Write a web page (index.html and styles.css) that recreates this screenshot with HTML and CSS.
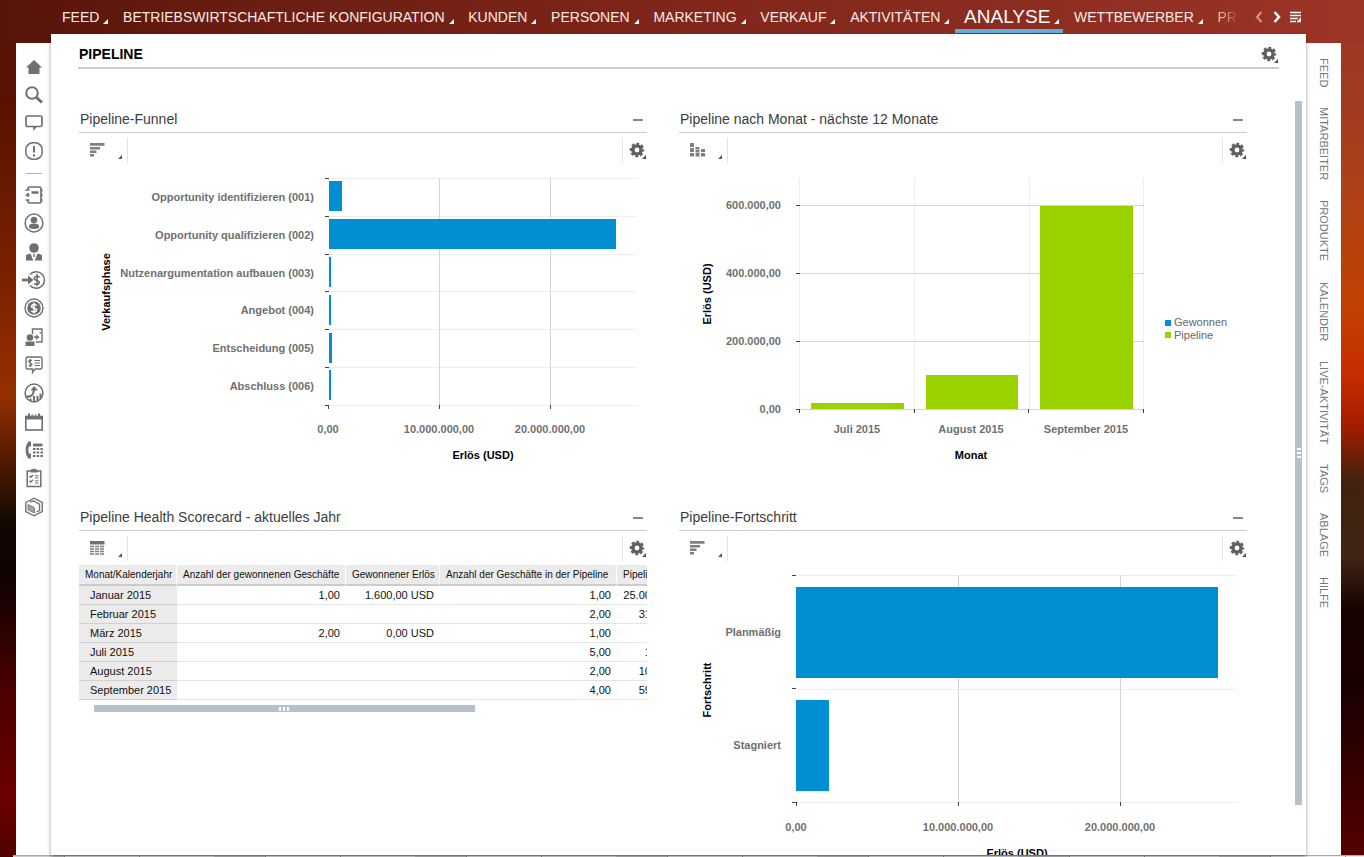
FILE: index.html
```
<!DOCTYPE html>
<html lang="de">
<head>
<meta charset="utf-8">
<title>Pipeline</title>
<link rel="stylesheet" href="styles.css">
</head>
<body>
<svg class="defs" aria-hidden="true">
  <symbol id="gear" viewBox="0 0 18 18">
    <circle cx="8" cy="8" r="4.1" fill="none" stroke="#606060" stroke-width="3.4"/>
    <circle cx="8" cy="8" r="6.1" fill="none" stroke="#606060" stroke-width="2.400" stroke-dasharray="2.9 1.891" stroke-dashoffset="1.45"/>
    <path d="M17 13v4h-4z" fill="#505050"/>
  </symbol>
  <symbol id="corner" viewBox="0 0 5 5"><path d="M5 0v5H0z" fill="currentColor"/></symbol>
  <symbol id="hbars" viewBox="0 0 15 14"><path d="M0 0h14.500v2.800H0zM0 4h10v2.500H0zM0 7.500h6.500V10H0zM0 11h4v2.500H0z" fill="#808080"/></symbol>
  <symbol id="vbars" viewBox="0 0 15 14"><path d="M0 0h4v4H0zM0 5h4v4H0zM0 10h4v3.500H0zM5.500 4h4v2.500h-4zM5.500 7h4v2.500h-4zM5.500 10h4v3.500h-4zM11 6h4v3h-4zM11 10h4v3.500h-4z" fill="#808080"/></symbol>
  <symbol id="grid" viewBox="0 0 15 14"><path d="M0 0h14.500v3.500H0z" fill="#707070"/><path d="M0 5.500h14.500M0 8h14.500M0 10.500h14.500M0 13h14.500" stroke="#808080" stroke-width="1.700" stroke-dasharray="4 1"/></symbol>
</svg>

<header class="topbar">
  <nav class="topnav" aria-label="Hauptnavigation">
    <a href="#" class="topnav-item">FEED<svg class="corner"><use href="#corner"/></svg></a>
    <a href="#" class="topnav-item">BETRIEBSWIRTSCHAFTLICHE KONFIGURATION<svg class="corner"><use href="#corner"/></svg></a>
    <a href="#" class="topnav-item">KUNDEN<svg class="corner"><use href="#corner"/></svg></a>
    <a href="#" class="topnav-item">PERSONEN<svg class="corner"><use href="#corner"/></svg></a>
    <a href="#" class="topnav-item">MARKETING<svg class="corner"><use href="#corner"/></svg></a>
    <a href="#" class="topnav-item">VERKAUF<svg class="corner"><use href="#corner"/></svg></a>
    <a href="#" class="topnav-item">AKTIVITÄTEN<svg class="corner"><use href="#corner"/></svg></a>
    <a href="#" class="topnav-item active" aria-current="page">ANALYSE<svg class="corner"><use href="#corner"/></svg></a>
    <a href="#" class="topnav-item">WETTBEWERBER<svg class="corner"><use href="#corner"/></svg></a>
    <a href="#" class="topnav-item fading">PR</a>
  </nav>
  <div class="topnav-tools">
    <button type="button" class="icon-btn dim" aria-label="Zurück"><svg width="10" height="12" viewBox="0 0 10 12"><path d="M7.500 1L3 6l4.500 5" fill="none" stroke="#fff" stroke-width="2"/></svg></button>
    <button type="button" class="icon-btn" aria-label="Weiter"><svg width="10" height="12" viewBox="0 0 10 12"><path d="M2.500 1L7 6l-4.500 5" fill="none" stroke="#fff" stroke-width="2.500"/></svg></button>
    <button type="button" class="icon-btn" aria-label="Menü"><svg width="12" height="12" viewBox="0 0 12 12"><path d="M0 1.500h11M0 4.500h11M0 7.500h8M0 10.500h6" stroke="#fff" stroke-width="1.600"/><path d="M11 6v5.300H6.500z" fill="#fff"/></svg></button>
  </div>
</header>

<div class="shell">
  <nav class="rail-left" aria-label="Arbeitsbereiche">
    <div class="rail-group rail-main">
      <a href="#" aria-label="Startseite"><svg viewBox="0 0 20 20"><path d="M10 3l8 7.500h-2.500V17h-11v-6.500H2z" fill="#707070" stroke="none"/></svg></a>
      <a href="#" aria-label="Suche"><svg viewBox="0 0 20 20"><circle cx="8" cy="8" r="5.800" stroke-width="2"/><path d="M12.500 12.500l5.500 5" stroke-width="3"/></svg></a>
      <a href="#" aria-label="Feed"><svg viewBox="0 0 20 20"><rect x="2" y="3" width="16" height="10.500" rx="1.500" stroke-width="1.700"/><path d="M9 13.500h4L9.500 18z" fill="#707070" stroke="none"/></svg></a>
      <a href="#" aria-label="Hinweise"><svg viewBox="0 0 20 20"><rect x="1.800" y="1.800" width="16.400" height="16.400" rx="7" stroke-width="1.500"/><path d="M10 5v6.500M10 13.200v2.300" stroke-width="2"/></svg></a>
    </div>
    <hr class="rail-divider">
    <div class="rail-group rail-work">
      <a href="#" aria-label="Kontakte"><svg viewBox="0 0 20 20"><path d="M4 5V3.500Q4 2 5.500 2h10Q17 2 17 3.500v13q0 1.500-1.500 1.500h-10Q4 18 4 16.500V15M4 8v4" stroke-width="1.700"/><path d="M7.500 7.500h7" stroke-width="2.500"/><path d="M1.500 5h4M1.500 10h4M1.500 15h4M17.800 4v2.500M17.800 9v2.500M17.800 14v2.500" stroke-width="1.400"/></svg></a>
      <a href="#" aria-label="Person"><svg viewBox="0 0 20 20"><circle cx="10" cy="10" r="8.900" stroke-width="1.500"/><circle cx="10" cy="7" r="3.300" fill="#707070" stroke="none"/><path d="M5 15v-1.500Q5 10.500 10 10.500t5 3V15Q10 17 5 15z" fill="#707070" stroke="none"/></svg></a>
      <a href="#" aria-label="Mitarbeiter"><svg viewBox="0 0 20 20"><circle cx="10" cy="6" r="4.800" fill="#707070" stroke="none"/><path d="M6.500 11.500L2 13v5.500h7.300zM13.500 11.500L18 13v5.500h-7.300z" fill="#707070" stroke="none"/><path d="M10 12v3" stroke-width="1.500"/></svg></a>
      <a href="#" aria-label="Leads"><svg class="wide" viewBox="-2 0 24 20"><path d="M6 4.500a8.300 8.300 0 1 1 0 11" stroke-width="1.500"/><path d="M-2 10h8" stroke-width="2.800"/><path d="M4 5.500L9.500 10 4 14.500z" fill="#707070" stroke="none"/><path d="M15.800 7.200q-3-2-5 0t1.500 3q4 1 2.700 3t-5.200.5M13 4v12" stroke-width="1.600"/></svg></a>
      <a href="#" aria-label="Opportunitys"><svg viewBox="0 0 20 20"><circle cx="10" cy="10" r="9" stroke-width="1.400"/><circle cx="10" cy="10" r="6.800" fill="#707070" stroke="none"/><path d="M12.600 7.300q-2.800-1.500-4.600 0t1.500 2.700q4 .8 2.800 2.800t-5 .3M10 4.500v11" stroke="#fff" stroke-width="1.500"/></svg></a>
      <a href="#" aria-label="Besuche"><svg viewBox="0 0 20 20"><path d="M8.500 7V2H18v13h-6" stroke-width="1.400"/><circle cx="6" cy="10.500" r="3.300" fill="#707070" stroke="none"/><path d="M1.500 19v-4.500h9V19z" fill="#707070" stroke="none"/><path d="M10 10h4" stroke-width="1.500"/><path d="M12 7.500L15.500 10 12 13zM15 5h2v2z" fill="#707070" stroke="none"/></svg></a>
      <a href="#" aria-label="Angebote"><svg viewBox="0 0 20 20"><path d="M3.500 2h13Q18 2 18 3.500v9q0 1.500-1.500 1.500H11l-2.500 3.500V14h-5Q2 14 2 12.500v-9Q2 2 3.500 2z" stroke-width="1.400"/><path d="M8 5.700q-2.200-1-3 0T6.200 8q2.300.5 1.600 2t-3.300.5M6.300 4v8M10.500 5.500h5.500M10.500 8h5.500M10.500 10.500h5.500" stroke-width="1.200"/></svg></a>
      <a href="#" aria-label="Prognosen"><svg viewBox="0 0 20 20"><circle cx="10" cy="10" r="8.900" stroke-width="1.500"/><path d="M2.500 13.500q7 1 7.500-7" stroke-width="2.200"/><path d="M6.500 7.500L10 3l4 4.500z" fill="#707070" stroke="none"/><path d="M6.500 18v-2.500M10 18.500V13M13.500 18v-5M16.500 15.500v-5" stroke-width="2"/></svg></a>
      <a href="#" aria-label="Kalender"><svg viewBox="0 0 20 20"><rect x="1.800" y="4.500" width="16.400" height="13.500" stroke-width="1.600"/><path d="M1.500 5.700h17" stroke-width="3.500"/><path d="M5 1.500v3M8.300 2.500v1M11.700 2.500v1M15 1.500v3" stroke-width="2"/></svg></a>
      <a href="#" aria-label="Telefon"><svg viewBox="0 0 20 20"><path d="M6 3q-3 1-3 7t3 7" stroke-width="2.800"/><path d="M5.500 1.500v5M5.500 13.500v5" stroke-width="3"/><path d="M9 5h9.500" stroke-width="2.800"/><path d="M9 9h10M9 12.500h10M9 16h10" stroke-width="2.200" stroke-dasharray="2.500 1.200"/></svg></a>
      <a href="#" aria-label="Aufgaben"><svg viewBox="0 0 20 20"><rect x="3.200" y="3" width="13.600" height="15.500" stroke-width="1.500"/><path d="M6.500 3h7M10 .8v3" stroke-width="2.800"/><path d="M5.500 8l1.200 1.300L9 7M5.500 12.800l1.200 1.300 2.300-2.300" stroke-width="1.400"/><path d="M11 7.800h3.500M11 10h3.500M11 12.800h3.500M11 15h3.500" stroke-width="1"/></svg></a>
      <a href="#" aria-label="Produkte"><svg viewBox="0 0 20 20"><path d="M1.800 5.500L10 1.200l8.200 4.300v9L10 18.800l-8.200-4.300z" stroke-width="1.400"/><path d="M6 4.800l3.500-.8 6 3.200v6.300L12.500 15" stroke-width="1.300"/><path d="M4 7.500l5.500 2.500q1 .5 1 1.500v4.500L4 13z" fill="#a0a0a0" stroke-width=".8"/></svg></a>
    </div>
  </nav>

  <main class="page">
    <div class="page-head">
      <h1>PIPELINE</h1>
      <button type="button" class="icon-btn" aria-label="Einstellungen"><svg class="gear"><use href="#gear"/></svg></button>
    </div>
    <div class="page-body">
      <div class="dashboard">
        <section class="card">
          <header class="card-head"><h2>Pipeline-Funnel</h2><button type="button" class="minimize" aria-label="Minimieren"></button></header>
          <div class="toolbar">
            <button type="button" class="type-btn" aria-label="Diagrammtyp"><svg class="type-icon"><use href="#hbars"/></svg><svg class="corner"><use href="#corner"/></svg></button>
            <button type="button" class="gear-btn" aria-label="Einstellungen"><svg class="gear"><use href="#gear"/></svg></button>
          </div>
          <svg class="chart" viewBox="79 167 568 310" role="img" aria-label="Pipeline-Funnel">
            <path class="grid-soft" d="M329 178.500h308M329 216.500h308M329 254.500h308M329 291.500h308M329 329.500h308M329 367.500h308M329 405.500h308"/>
            <path class="grid-line" d="M439.500 178v227M550.500 178v227"/>
            <path class="tick" d="M325 178.500h4M325 216.500h4M325 254.500h4M325 291.500h4M325 329.500h4M325 367.500h4M325 405.500h4M328.500 405v4M439.500 405v4M550.500 405v4"/>
            <g class="blue"><rect x="329" y="181" width="13" height="30"/><rect x="329" y="219" width="287" height="30"/><rect x="329" y="257" width="2" height="30"/><rect x="329" y="295" width="2" height="30"/><rect x="329" y="333" width="3" height="30"/><rect x="329" y="370" width="2" height="30"/></g>
            <g class="label end"><text x="314" y="201">Opportunity identifizieren (001)</text><text x="314" y="239">Opportunity qualifizieren (002)</text><text x="314" y="277">Nutzenargumentation aufbauen (003)</text><text x="314" y="314">Angebot (004)</text><text x="314" y="352">Entscheidung (005)</text><text x="314" y="390">Abschluss (006)</text></g>
            <g class="label mid"><text x="328" y="433">0,00</text><text x="439" y="433">10.000.000,00</text><text x="550" y="433">20.000.000,00</text></g>
            <g class="axis mid"><text x="483" y="459">Erlös (USD)</text><text transform="translate(110 292) rotate(-90)">Verkaufsphase</text></g>
          </svg>
        </section>

        <section class="card">
          <header class="card-head"><h2>Pipeline nach Monat - nächste 12 Monate</h2><button type="button" class="minimize" aria-label="Minimieren"></button></header>
          <div class="toolbar">
            <button type="button" class="type-btn" aria-label="Diagrammtyp"><svg class="type-icon"><use href="#vbars"/></svg><svg class="corner"><use href="#corner"/></svg></button>
            <button type="button" class="gear-btn" aria-label="Einstellungen"><svg class="gear"><use href="#gear"/></svg></button>
          </div>
          <svg class="chart" viewBox="679 167 568 310" role="img" aria-label="Pipeline nach Monat">
            <path class="grid-soft" d="M799.500 178v231M914.500 178v231M1029.500 178v231M1143.500 178v231"/>
            <path class="grid-line" d="M800 205.500h344M800 273.500h344M800 341.500h344M800 409.500h344"/>
            <path class="tick" d="M796 205.500h4M796 273.500h4M796 341.500h4M796 409.500h4M799.500 409v4M914.500 409v4M1028.500 409v4M1143.500 409v4"/>
            <g class="green"><rect x="811" y="403" width="93" height="6"/><rect x="926" y="375" width="92" height="34"/><rect x="1040" y="206" width="93" height="203"/></g>
            <g class="label end"><text x="781" y="209">600.000,00</text><text x="781" y="277">400.000,00</text><text x="781" y="345">200.000,00</text><text x="781" y="413">0,00</text></g>
            <g class="label mid"><text x="857" y="433">Juli 2015</text><text x="971" y="433">August 2015</text><text x="1086" y="433">September 2015</text></g>
            <g class="axis mid"><text x="971" y="459">Monat</text><text transform="translate(711 294) rotate(-90)">Erlös (USD)</text></g>
            <rect class="blue" x="1165" y="320" width="6" height="6"/><rect class="green" x="1165" y="332" width="6" height="6"/>
            <g class="legend"><text x="1174" y="326">Gewonnen</text><text x="1174" y="339">Pipeline</text></g>
          </svg>
        </section>

        <section class="card">
          <header class="card-head"><h2>Pipeline Health Scorecard - aktuelles Jahr</h2><button type="button" class="minimize" aria-label="Minimieren"></button></header>
          <div class="toolbar">
            <button type="button" class="type-btn" aria-label="Darstellung"><svg class="type-icon"><use href="#grid"/></svg><svg class="corner"><use href="#corner"/></svg></button>
            <button type="button" class="gear-btn" aria-label="Einstellungen"><svg class="gear"><use href="#gear"/></svg></button>
          </div>
          <div class="table-clip">
            <table class="scorecard">
              <colgroup><col class="c-month"><col class="c-won"><col class="c-revenue"><col class="c-count"><col class="c-value"></colgroup>
              <thead><tr><th scope="col">Monat/Kalenderjahr</th><th scope="col">Anzahl der gewonnenen Geschäfte</th><th scope="col">Gewonnener Erlös</th><th scope="col">Anzahl der Geschäfte in der Pipeline</th><th scope="col">Pipeline</th></tr></thead>
              <tbody>
                <tr><th scope="row">Januar 2015</th><td>1,00</td><td>1.600,00 USD</td><td>1,00</td><td>25.000.000,00 USD</td></tr>
                <tr><th scope="row">Februar 2015</th><td></td><td></td><td>2,00</td><td>310.000,00 USD</td></tr>
                <tr><th scope="row">März 2015</th><td>2,00</td><td>0,00 USD</td><td>1,00</td><td></td></tr>
                <tr><th scope="row">Juli 2015</th><td></td><td></td><td>5,00</td><td>17.000,00 USD</td></tr>
                <tr><th scope="row">August 2015</th><td></td><td></td><td>2,00</td><td>100.000,00 USD</td></tr>
                <tr><th scope="row">September 2015</th><td></td><td></td><td>4,00</td><td>598.000,00 USD</td></tr>
              </tbody>
            </table>
          </div>
          <div class="hscroll"><i></i><i></i><i></i></div>
        </section>

        <section class="card">
          <header class="card-head"><h2>Pipeline-Fortschritt</h2><button type="button" class="minimize" aria-label="Minimieren"></button></header>
          <div class="toolbar">
            <button type="button" class="type-btn" aria-label="Diagrammtyp"><svg class="type-icon"><use href="#hbars"/></svg><svg class="corner"><use href="#corner"/></svg></button>
            <button type="button" class="gear-btn" aria-label="Einstellungen"><svg class="gear"><use href="#gear"/></svg></button>
          </div>
          <svg class="chart" viewBox="679 565 568 310" role="img" aria-label="Pipeline-Fortschritt">
            <path class="grid-soft" d="M796 575.500h441M796 689.500h441M796 802.500h441"/>
            <path class="grid-line" d="M958.500 575v227M1120.500 575v227"/>
            <path class="tick" d="M792 575.500h4M792 688.500h4M792 802.500h4M796.500 802v4M958.500 802v4M1120.500 802v4"/>
            <g class="blue"><rect x="796" y="587" width="422" height="91"/><rect x="796" y="700" width="33" height="91"/></g>
            <g class="label end"><text x="781" y="636">Planmäßig</text><text x="781" y="749">Stagniert</text></g>
            <g class="label mid"><text x="796" y="831">0,00</text><text x="958" y="831">10.000.000,00</text><text x="1120" y="831">20.000.000,00</text></g>
            <g class="axis mid"><text x="1017" y="857">Erlös (USD)</text><text transform="translate(711 690) rotate(-90)">Fortschritt</text></g>
          </svg>
        </section>
      </div>
      <div class="vscroll"><i></i><i></i><i></i></div>
    </div>
  </main>

  <nav class="rail-right" aria-label="Seitenleiste">
    <a href="#">FEED</a><a href="#">MITARBEITER</a><a href="#">PRODUKTE</a><a href="#">KALENDER</a><a href="#">LIVE-AKTIVITÄT</a><a href="#">TAGS</a><a href="#">ABLAGE</a><a href="#">HILFE</a>
  </nav>
</div>
<footer class="bottom-strip"></footer>
</body>
</html>
```
FILE: styles.css
```
* { box-sizing: border-box; }
body {
  margin: 0;
  height: 100vh;
  display: flex;
  flex-direction: column;
  overflow: hidden;
  font-family: "Liberation Sans", Arial, sans-serif;
  font-size: 11px;
  color: #333;
  background:
    linear-gradient(90deg, #571409 0%, #6c1e12 20%, #80261a 50%, #923023 85%, #9d3526 100%) top / 100% 43px no-repeat,
    linear-gradient(180deg, #571409 0, #5a1200 12%, #7c2200 33%, #972f00 46%, #5a1d00 53%, #120800 61%, #100300 68%, #4a0000 80%, #6e0000 93%, #500000 100%) left / 50% 100% no-repeat,
    linear-gradient(180deg, #9d3526 0, #a23a22 12%, #b04216 24%, #c24000 36%, #c62c00 44%, #a01c00 50%, #43220f 56%, #402414 65%, #180300 71%, #180000 80%, #560000 100%) right / 50% 100% no-repeat;
}
.defs { width: 0; height: 0; position: absolute; }
a { color: inherit; text-decoration: none; }
button { border: 0; padding: 0; background: none; font: inherit; color: inherit; }
h1, h2 { margin: 0; }
.corner { width: 5px; height: 5px; flex: none; }
.gear { width: 18px; height: 18px; display: block; }

.topbar {
  height: 34px;
  flex: none;
  display: flex;
  align-items: center;
  padding: 0 62px;
  color: #fae9e4;
}
.topnav {
  display: flex;
  justify-content: space-between;
  flex: 1;
  min-width: 0;
  height: 34px;
  margin-right: 17px;
  overflow: hidden;
}
.topnav-item {
  display: flex;
  align-items: center;
  gap: 4px;
  height: 33px;
  font-size: 14px;
  white-space: nowrap;
}
.topnav-item .corner { margin-top: 9px; color: #fff; }
.topnav-item.active {
  font-size: 19px;
  color: #fff;
  padding: 4px 4px 0 9px;
  margin: 0 -4px 0 -9px;
  border-bottom: 4px solid #63acdf;
}
.topnav-item.fading {
  color: transparent;
  background: linear-gradient(90deg, #f0cfc6, #a04537);
  background-clip: text;
}
.topnav-tools { display: flex; align-items: center; gap: 8px; }
.icon-btn { display: flex; }
.dim { opacity: .5; }

.shell { flex: 1; min-height: 0; display: flex; padding: 0 23px 0 16px; }
.rail-left, .rail-right { width: 35px; flex: none; margin-top: 9px; background: #fff; }
.rail-left { padding-top: 10px; }
.rail-group { display: grid; grid-auto-rows: 1fr; }
.rail-main { height: 112px; }
.rail-work { height: 340px; }
.rail-group a { display: flex; align-items: center; justify-content: center; }
.rail-group svg { width: 20px; height: 20px; fill: none; stroke: #707070; }
.rail-group .wide { width: 24px; }
.rail-divider { border: 0; height: 1px; width: 16px; margin: 8px auto 7px; background: #b0b0b0; }
.rail-right {
  display: flex;
  flex-direction: column;
  align-items: center;
  gap: 20px;
  padding-top: 15px;
  color: #777;
}
.rail-right a { writing-mode: vertical-rl; white-space: nowrap; }

.page {
  flex: 1;
  min-width: 0;
  display: flex;
  flex-direction: column;
  background: #fff;
  position: relative;
  box-shadow: 0 2px 4px rgba(0, 0, 0, .4);
}
.page-head {
  flex: none;
  height: 35px;
  display: flex;
  align-items: flex-end;
  justify-content: space-between;
  margin: 0 27px;
  padding-bottom: 3px;
  border-bottom: 2px solid #ccc;
}
h1 { font-size: 14px; line-height: 20px; color: #000; padding: 0 0 0 1px; }
.page-body { flex: 1; min-height: 0; display: flex; padding: 0 4px 0 28px; }
.dashboard {
  flex: 1;
  min-width: 0;
  overflow: hidden;
  display: grid;
  grid-template-columns: minmax(0, 1fr) minmax(0, 1fr);
  gap: 26px 32px;
  align-content: start;
  padding-top: 36px;
  margin-right: 48px;
}
.vscroll {
  width: 7px;
  margin: 32px 0 50px;
  background: #b5c1cb;
  display: flex;
  flex-direction: column;
  align-items: center;
  justify-content: center;
  gap: 2px;
}
.vscroll i { width: 4px; height: 2px; background: #fff; }

.card-head {
  height: 28px;
  display: flex;
  align-items: center;
  justify-content: space-between;
  padding: 0 4px 0 1px;
  border-bottom: 1px solid #ccc;
}
h2 { font-size: 14px; line-height: 20px; font-weight: 400; color: #3c3c3c; }
.minimize { width: 10px; height: 2px; background: #888; margin-top: 3px; }
.toolbar { height: 34px; display: flex; justify-content: space-between; align-items: center; }
.type-btn {
  display: flex;
  align-items: center;
  justify-content: space-between;
  width: 49px;
  height: 25px;
  padding: 0 5px 0 11px;
  border-right: 1px solid #e2e2e2;
  color: #555;
}
.type-icon { width: 15px; height: 14px; }
.type-btn .corner { width: 4px; height: 4px; margin-top: 14px; }
.gear-btn { height: 25px; display: flex; align-items: center; padding: 2px 0 0 6px; border-left: 1px solid #e2e2e2; }

.chart { display: block; width: 100%; height: auto; font-size: 11px; }
.grid-soft { stroke: #eee; }
.grid-line { stroke: #d4d4d4; }
.tick { stroke: #444; }
.blue { fill: #008fd3; }
.green { fill: #99d101; }
.label { font-weight: 700; fill: #707070; }
.axis { font-weight: 700; fill: #000; }
.legend { fill: #666; }
.end { text-anchor: end; }
.mid { text-anchor: middle; }

.table-clip { overflow: hidden; }
.scorecard { table-layout: fixed; width: 647px; border-collapse: separate; border-spacing: 0; color: #111; }
.c-month { width: 98px; }
.c-won { width: 169px; }
.c-revenue { width: 94px; }
.c-count { width: 177px; }
.c-value { width: 109px; }
.scorecard th, .scorecard td { height: 19px; padding: 0 6px; font-weight: 400; white-space: nowrap; border-bottom: 1px solid #e4e4e4; line-height: 16px; }
.scorecard td { text-align: right; }
.scorecard thead th { height: 21px; font-size: 10px; text-align: left; background: #ebebeb; border-bottom: 2px solid #ccc; border-right: 1px solid #fff; }
.scorecard tbody th { text-align: left; background: #ebebeb; border-bottom-color: #d0d0d0; padding-left: 11px; padding-right: 0; }
.hscroll {
  height: 7px;
  width: 67%;
  margin: 5px 0 0 15px;
  background: #b5c1cb;
  display: flex;
  align-items: center;
  justify-content: center;
  gap: 2px;
}
.hscroll i { width: 2px; height: 4px; background: #fff; }

.bottom-strip {
  height: 2px;
  flex: none;
  margin-left: 13px;
  background: repeating-linear-gradient(90deg, #ccc 0 51px, #999 51px 52px, #eee 52px 126px, #999 126px 127px, #eee 127px 201px);
  border-top: 1px solid #aaa;
}
```
